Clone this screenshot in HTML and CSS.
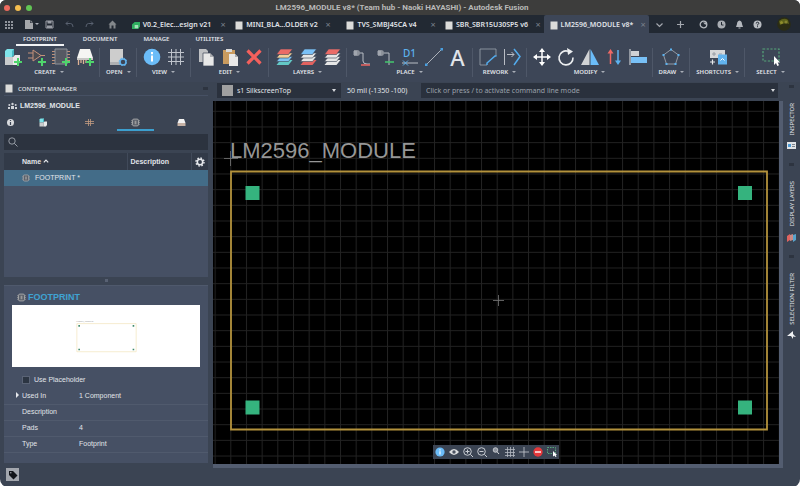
FILE: index.html
```
<!DOCTYPE html>
<html lang="en">
<head>
	<meta charset="UTF-8">
	<meta name="viewport" content="width=device-width">
	<title>LM2596_MODULE v8* - Autodesk Fusion</title>
	<link rel="stylesheet" href="styles.css">
</head>
<body>
<svg class="defs" aria-hidden="true">
	<symbol id="plus" viewBox="0 0 8 8"><path d="M4 0v8M0 4h8" stroke="#4fd56c" stroke-width="2"/></symbol>
	<symbol id="doc" viewBox="0 0 8 9"><path d="M0.5 0.5h7v8h-7z" fill="#dcdcda"/></symbol>
	<symbol id="info" viewBox="0 0 18 18"><circle cx="9" cy="9" r="8.3" fill="#6bbcf8"/><path d="M8 7.5h2v6H8zM8 4h2v2.2H8z" fill="#fff"/></symbol>
	<symbol id="grid" viewBox="0 0 18 18"><path d="M4.500 1v16M9 1v16M13.500 1v16M1 4.500h16M1 9h16M1 13.500h16" stroke="#bfc4cc" stroke-width="1" fill="none"/></symbol>
	<symbol id="chip" viewBox="0 0 10 10"><path d="M0 3h10M0 5h10M0 7h10" stroke="#8a8c91" fill="none"/><rect x="1.700" y="1.200" width="6.600" height="7.600" rx="1.500" fill="#5c616b" stroke="#a9aaac"/><path d="M4 3v4h2V3z" fill="#999"/></symbol>
	<symbol id="select" viewBox="0 0 18 18"><path d="M1 1h16v12H1z" fill="none" stroke="#57a67b" stroke-width="1.200" stroke-dasharray="2.200 1.500"/><path d="M12 8v9l2-2 1.300 3 1.700-.8-1.300-2.700H18z" fill="#fff"/></symbol>
	<symbol id="layers" viewBox="0 0 18 18"><path d="M5.500 12h12l-4 5h-12z" fill="var(--d)"/><path d="M5.500 8.500h12l-4 5h-12z" fill="var(--c)" stroke="#3d4657" stroke-width=".6"/><path d="M5.500 5h12l-4 5h-12z" fill="var(--b)" stroke="#3d4657" stroke-width=".6"/><path d="M5.500 1h12l-4 5.500h-12z" fill="var(--a)" stroke="#3d4657" stroke-width=".6"/></symbol>
	<symbol id="cube" viewBox="0 0 18 18"><path d="M1 3l2-2h7v6l-2 2H1z" fill="#7fe3ea"/><path d="M8 3l2-2v6L8 9z" fill="#45b9c4"/><path d="M1 9h8v8H1z" fill="#c9cbcc"/><path d="M9 9l2-2h5v7l-2 3H9z" fill="#e9e9e9"/></symbol>
</svg>

<div class="window">
	<header class="titlebar">
		<span class="lights"><i class="light red"></i><i class="light yellow"></i><i class="light green"></i></span>
		<h1 class="title">LM2596_MODULE v8* (Team hub - Naoki HAYASHI) - Autodesk Fusion</h1>
	</header>

	<div class="appbar">
		<div class="quick">
			<button aria-label="Data panel"><svg viewBox="0 0 9 9"><path d="M1 1h2v2H1zM4 1h2v2H4zM7 1h2v2H7zM1 4h2v2H1zM4 4h2v2H4zM7 4h2v2H7zM1 7h2v2H1zM4 7h2v2H4zM7 7h2v2H7z" fill="#8f949c"/></svg></button>
			<button class="file" aria-label="File"><svg viewBox="0 0 9 9"><path d="M1 0h5v3h3v6H1z" fill="#a4a7ab"/><path d="M6.500 0L9 2.500H6.500z" fill="#8c9096"/></svg><i class="caret"></i></button>
			<button aria-label="Save"><svg viewBox="0 0 9 9"><path d="M1 1h7v7H1z" fill="none" stroke="#9a9ea6"/><path d="M2.500 1h4v2.500h-4zM2 5.500h5V8H2z" fill="#9a9ea6"/></svg></button>
			<button aria-label="Undo"><svg viewBox="0 0 9 9"><path d="M3 1.500L1 3.500l2 2M1 3.500h4.500Q8 3.500 8 7" fill="none" stroke="#596170"/></svg></button>
			<button aria-label="Redo"><svg viewBox="0 0 9 9"><path d="M6 1.500l2 2-2 2M8 3.500H3.500Q1 3.500 1 7" fill="none" stroke="#596170"/></svg></button>
			<button class="home" aria-label="Home"><svg viewBox="0 0 9 9"><path d="M0.500 4.500L4.500 .5l4 4h-1v4h-2v-3h-2v3h-2v-4z" fill="#83878b"/></svg></button>
		</div>
		<nav class="docs">
			<div class="doc"><a href="#"><svg viewBox="0 0 9 8"><path d="M0 3l3-3h6v5L7 8H0z" fill="#2fae60"/><path d="M3 3.500h4V7H3z" fill="#a5e2b8"/></svg>V0.2_Elec...esign v21</a><button class="close" aria-label="Close">×</button></div>
			<div class="doc"><a href="#"><svg><use href="#doc"/></svg>MINI_BLA...OLDER v2</a><button class="close" aria-label="Close">×</button></div>
			<div class="doc"><a href="#"><svg><use href="#doc"/></svg>TVS_SMBJ45CA v4</a><button class="close" aria-label="Close">×</button></div>
			<div class="doc"><a href="#"><svg><use href="#doc"/></svg>SBR_SBR15U30SP5 v6</a><button class="close" aria-label="Close">×</button></div>
			<div class="doc active"><a href="#"><svg><use href="#doc"/></svg>LM2596_MODULE v8*</a><button class="close" aria-label="Close">×</button></div>
		</nav>
		<div class="account">
			<button class="more" aria-label="Tab list"><svg viewBox="0 0 9 9"><path d="M1.500 3.500l3 3 3-3" fill="none" stroke="#a4a8af" stroke-width="1.200"/></svg></button>
			<button class="add" aria-label="New tab"><svg viewBox="0 0 9 9"><path d="M4.500 1v7M1 4.500h7" stroke="#a4a8af" stroke-width="1.200"/></svg></button>
			<button aria-label="Extensions"><svg viewBox="0 0 9 9"><circle cx="4.500" cy="4.500" r="3.300" fill="none" stroke="#b4b8be" stroke-width="1.300"/><path d="M4 2.500h4v2H6z" fill="#b4b8be"/></svg></button>
			<button aria-label="Job status"><svg viewBox="0 0 9 9"><circle cx="4.500" cy="4.500" r="4" fill="#a9adb3"/><path d="M4.500 2v3h2" fill="none" stroke="#222933"/></svg></button>
			<button aria-label="Notifications"><svg viewBox="0 0 9 9"><path d="M4.500 .5Q7 1 7 4l1 3H1l1-3q0-3 2.500-3.500zM3.500 7.500h2v1h-2z" fill="#b4b8be"/></svg></button>
			<button aria-label="Help"><svg viewBox="0 0 9 9"><circle cx="4.500" cy="4.500" r="4" fill="#b9bdc3"/><path d="M3.200 3.500q0-1.300 1.300-1.300t1.300 1.200q0 .8-1.300 1.300v.8M4.500 6.200v1" fill="none" stroke="#222933"/></svg></button>
			<button class="avatar" aria-label="Profile"><svg viewBox="0 0 14 14"><circle cx="7" cy="7" r="6.800" fill="#2b2c14"/><path d="M2 4q5-4 9-1l1 4q-4-2-9 1z" fill="#5d621a"/><circle cx="4.500" cy="5.500" r="1.500" fill="#8f8d2c"/><circle cx="9" cy="5" r="1.500" fill="#858432"/></svg></button>
		</div>
	</div>

	<div class="ribbon">
		<nav class="modes">
			<a class="active" href="#">FOOTPRINT</a>
			<a href="#">DOCUMENT</a>
			<a href="#">MANAGE</a>
			<a href="#">UTILITIES</a>
		</nav>
		<div class="groups">
			<div class="group">
				<div class="tools">
					<button aria-label="New component"><svg viewBox="0 0 18 18"><use href="#cube"/><use href="#plus" x="10" y="10" width="8" height="8"/></svg></button>
					<button aria-label="New symbol"><svg viewBox="0 0 18 18"><path d="M0 5h5M0 10h5M12 7.500h5" stroke="#c4917a"/><path d="M5 2l8 5.500L5 13z" fill="#4b4b50" stroke="#c4917a"/><use href="#plus" x="10" y="10" width="8" height="8"/></svg></button>
					<button aria-label="New footprint"><svg viewBox="0 0 18 18"><path d="M0 3.500h18M0 6.500h18M0 9.500h18M0 12.500h18M0 15.500h12" stroke="#bf9077"/><path d="M3 1h12v15H3z" fill="#555963" stroke="#8e9299"/><use href="#plus" x="10" y="10" width="8" height="8"/></svg></button>
					<button aria-label="New package"><svg viewBox="0 0 18 18"><path d="M4 1h10l3 9H1z" fill="#f5f5f3"/><path d="M1 10h16v2H1z" fill="#c7c7c5"/><path d="M2.500 12v5M5 12v3M7.500 12v4M10 12v3" stroke="#dfb295" stroke-width="1.300"/><use href="#plus" x="10" y="10" width="8" height="8"/></svg></button>
				</div>
				<button class="menu">CREATE<i class="caret"></i></button>
			</div>
			<div class="group">
				<div class="tools">
					<button aria-label="Open"><svg viewBox="0 0 18 18"><path d="M1 1h13v15H1z" fill="#cdcdcd"/><path d="M1 14h13v3H1z" fill="#aeb0b3"/><circle cx="14" cy="14" r="3" fill="#3d4657" stroke="#62b3ee" stroke-width="1.500"/><circle cx="14" cy="14" r="3.900" fill="none" stroke="#62b3ee" stroke-dasharray="1.500 1.560"/></svg></button>
				</div>
				<button class="menu">OPEN<i class="caret"></i></button>
			</div>
			<div class="group">
				<div class="tools">
					<button aria-label="Info"><svg><use href="#info"/></svg></button>
					<button aria-label="Grid"><svg><use href="#grid"/></svg></button>
				</div>
				<button class="menu">VIEW<i class="caret"></i></button>
			</div>
			<div class="group">
				<div class="tools">
					<button aria-label="Copy"><svg viewBox="0 0 18 18"><path d="M2 1h7l2 2v11H2z" fill="#bfc1c4"/><path d="M6 5h7l4 4v9H6z" fill="#e8e8e8" stroke="#3d4657" stroke-width=".7"/><path d="M13 5v4h4z" fill="#aaacaf"/></svg></button>
					<button aria-label="Paste"><svg viewBox="0 0 18 18"><path d="M2 2h12v14H2z" fill="#c99b5f"/><path d="M5 1h6v3H5z" fill="#d9d9d9"/><path d="M8 6h6l3 3v9H8z" fill="#e8e8e8"/><path d="M14 6v3h3z" fill="#aaacaf"/></svg></button>
					<button aria-label="Delete"><svg viewBox="0 0 18 18"><path d="M2.500 2.500l13 13M15.500 2.500l-13 13" stroke="#f4605c" stroke-width="3.200"/></svg></button>
				</div>
				<button class="menu">EDIT<i class="caret"></i></button>
			</div>
			<div class="group">
				<div class="tools">
					<button aria-label="Layer settings"><svg class="all-layers"><use href="#layers"/></svg></button>
					<button aria-label="Bottom layer"><svg class="bottom-layer"><use href="#layers"/></svg></button>
					<button aria-label="Top layer"><svg class="top-layer"><use href="#layers"/></svg></button>
				</div>
				<button class="menu">LAYERS<i class="caret"></i></button>
			</div>
			<div class="group">
				<div class="tools">
					<button aria-label="Pad"><svg viewBox="0 0 18 18"><path d="M1 2h3q3 0 3 3t-3 3H1z" fill="#8d929b"/><path d="M0 4h4M0 6h4" stroke="#c8ccd2" stroke-width=".7"/><path d="M7 5h3v8q0 3 4 3h3" fill="none" stroke="#b9bdc5"/><path d="M8 17h9" stroke="#e0625f" stroke-width="1.600"/></svg></button>
					<button aria-label="Wire pad"><svg viewBox="0 0 18 18"><path d="M1 2h3q3 0 3 3t-3 3H1z" fill="#8d929b"/><path d="M0 4h4M0 6h4" stroke="#c8ccd2" stroke-width=".7"/><path d="M7 5h5v12" fill="none" stroke="#b9bdc5"/><path d="M8 14h9" stroke="#45c06c" stroke-width="1.600"/></svg></button>
					<button class="name-mark">D1<svg viewBox="0 0 18 7"><path d="M1 4h16" stroke="#b9bdc5"/><path d="M2 1.500l5 5M7 1.500l-5 5" stroke="#5cb2ef"/></svg></button>
					<button aria-label="Line"><svg viewBox="0 0 18 18"><path d="M1.500 16.500l15-15" stroke="#b9bdc5" stroke-width=".9"/><path d="M0 15.500h2.500V18H0zM15.500 0H18v2.500h-2.500z" fill="#4a9fe0"/></svg></button>
					<button class="text-mark">A</button>
				</div>
				<button class="menu">PLACE<i class="caret"></i></button>
			</div>
			<div class="group">
				<div class="tools">
					<button aria-label="Miter"><svg viewBox="0 0 18 18"><path d="M8 17H1V1h16v7" fill="none" stroke="#9da3ad" stroke-width=".8"/><path d="M8 17v-2l8-7h1.500" fill="none" stroke="#53acee" stroke-width="1.500"/></svg></button>
					<button aria-label="Split"><svg viewBox="0 0 18 18"><path d="M1.500 1v16M4 6.500h7M8.500 4L11 6.500 8.500 9" fill="none" stroke="#b9bdc5"/><path d="M11 1l6 7.500-6 8.500" fill="none" stroke="#53acee" stroke-width="1.500"/></svg></button>
				</div>
				<button class="menu">REWORK<i class="caret"></i></button>
			</div>
			<div class="group">
				<div class="tools">
					<button aria-label="Move"><svg viewBox="0 0 18 18"><path d="M9 2v14M2 9h14" stroke="#fff" stroke-width="1.500"/><path d="M9 0l3 4H6zM9 18l3-4H6zM0 9l4-3v6zM18 9l-4-3v6z" fill="#fff"/></svg></button>
					<button aria-label="Rotate"><svg viewBox="0 0 18 18"><path d="M11 3.200A7 7 0 1 0 16 9.500" fill="none" stroke="#eceef0" stroke-width="1.600"/><path d="M10 0l6 3.500-5 3.500z" fill="#eceef0"/></svg></button>
					<button aria-label="Mirror"><svg viewBox="0 0 18 18"><path d="M8.500 1v16H0z" fill="#d0d2d4"/><path d="M9.500 1v16H18z" fill="#6bbcf8"/></svg></button>
					<button aria-label="Swap"><svg viewBox="0 0 18 18"><path d="M5.500 4v12" stroke="#ee6965" stroke-width="1.500"/><path d="M5.500 1L8.500 5.500h-6z" fill="#ee6965"/><path d="M13 2v12" stroke="#5cb2ef" stroke-width="1.500"/><path d="M13 17l3-4.500h-6z" fill="#5cb2ef"/></svg></button>
					<button aria-label="Align"><svg viewBox="0 0 18 18"><path d="M1 1v16" stroke="#e4e6e8"/><path d="M2 3h8v5H2z" fill="#cfd1d4"/><path d="M2 9h16v6H2z" fill="#78c0f6"/></svg></button>
				</div>
				<button class="menu">MODIFY<i class="caret"></i></button>
			</div>
			<div class="group">
				<div class="tools">
					<button aria-label="Polygon"><svg viewBox="0 0 18 18"><path d="M9 1.500l7.500 5.500-3 9h-9l-3-9z" fill="none" stroke="#a9aeb7" stroke-width=".8"/><path d="M8 .5h2v2H8zM15.500 6h2v2h-2zM12.500 15h2v2h-2zM3.500 15h2v2h-2zM.5 6h2v2h-2z" fill="#5cb2ef"/></svg></button>
				</div>
				<button class="menu">DRAW<i class="caret"></i></button>
			</div>
			<div class="group">
				<div class="tools">
					<button aria-label="Shortcut keys"><svg viewBox="0 0 18 18"><path d="M1 2h15v8H1z" fill="#d6d7d9"/><path d="M5 4v4M3 6h4M10 6h3" stroke="#8b919b" stroke-width=".8"/><path d="M9 6.500h9v10H9z" fill="#62b3ee"/><path d="M11.500 12.500l2-2 2 2" fill="none" stroke="#fff"/><path d="M3.500 11.500v5M1 14h5" stroke="#e6e8ea" stroke-width="1.200"/></svg></button>
				</div>
				<button class="menu">SHORTCUTS<i class="caret"></i></button>
			</div>
			<div class="group">
				<div class="tools">
					<button aria-label="Select"><svg><use href="#select"/></svg></button>
				</div>
				<button class="menu">SELECT<i class="caret"></i></button>
			</div>
		</div>
	</div>

	<main class="main">
		<aside class="sidebar">
			<h2 class="side-head"><svg><use href="#doc"/></svg>CONTENT MANAGER<i class="pin"></i></h2>
			<p class="library"><svg viewBox="0 0 9 8"><path d="M0 7V5h2v2zM3 7V4h3v3zM7 7V5h2v2z" fill="#d0d3d8"/><circle cx="1.300" cy="3" r="1" fill="#d0d3d8"/><circle cx="4.500" cy="2" r="1.200" fill="#d0d3d8"/><circle cx="7.700" cy="3" r="1" fill="#d0d3d8"/></svg>LM2596_MODULE</p>
			<nav class="kinds">
				<a href="#" aria-label="Info"><svg viewBox="0 0 9 9"><circle cx="4.500" cy="4.500" r="3.500" fill="#d9dbde"/><path d="M4.500 2v1M4.500 4v3" stroke="#3b4453" stroke-width="1.200"/></svg></a>
				<a href="#" aria-label="Components"><svg><use href="#cube"/></svg></a>
				<a href="#" aria-label="Symbols"><svg viewBox="0 0 9 9"><path d="M0 3.500h9M0 5.500h9M3.500 1v7M5.500 1v7" stroke="#c29a80" stroke-width=".8"/></svg></a>
				<a class="active" href="#" aria-label="Footprints"><svg><use href="#chip"/></svg></a>
				<a href="#" aria-label="Packages"><svg viewBox="0 0 9 9"><path d="M2 1h5l1.500 4h-8z" fill="#f3f3f2"/><path d="M.5 5h8v3h-8z" fill="#c6b2a5"/></svg></a>
			</nav>
			<label class="search"><svg viewBox="0 0 10 10"><circle cx="4" cy="4" r="3.200" fill="none" stroke="#a2a7b0" stroke-width=".9"/><path d="M6.300 6.300L9.500 9.500" stroke="#a2a7b0" stroke-width=".9"/></svg><input type="text" aria-label="Search"></label>
			<div class="list">
				<table>
					<thead>
						<tr>
							<th class="col-name">Name<svg viewBox="0 0 6 6"><path d="M.8 4.300L3 2l2.200 2.300" fill="none" stroke="#e6e8ec" stroke-width="1.200"/></svg></th>
							<th>Description</th>
							<th class="col-gear"><button aria-label="Columns"><svg viewBox="0 0 10 10"><circle cx="5" cy="5" r="2.700" fill="none" stroke="#e6e8ec" stroke-width="1.600"/><circle cx="5" cy="5" r="4" fill="none" stroke="#e6e8ec" stroke-width="1.400" stroke-dasharray="1.570 1.570"/></svg></button></th>
						</tr>
					</thead>
					<tbody>
						<tr><td class="col-name"><svg><use href="#chip"/></svg>FOOTPRINT *</td><td></td><td></td></tr>
					</tbody>
				</table>
			</div>
			<i class="splitter"></i>
			<section class="details">
				<h3><svg><use href="#chip"/></svg>FOOTPRINT</h3>
				<svg class="preview" viewBox="0 0 187 62">
					<text class="preview-name" x="64" y="17">LM2596_MODULE</text>
					<path d="M64.500 18.500h59v28h-59z" fill="none" stroke="#f4e5bd" stroke-width=".7"/>
					<path d="M66 20h1.600v1.600H66zM120 20h1.600v1.600H120zM66 43.500h1.600v1.600H66zM120 43.500h1.600v1.600H120z" fill="#3f8a6b"/>
				</svg>
				<label class="placeholder"><input type="checkbox">Use Placeholder</label>
				<table>
					<tr><th scope="row" class="expand">Used In</th><td>1 Component</td></tr>
					<tr><th scope="row">Description</th><td></td></tr>
					<tr><th scope="row">Pads</th><td>4</td></tr>
					<tr><th scope="row">Type</th><td>Footprint</td></tr>
				</table>
			</section>
		</aside>

		<section class="editor">
			<div class="params">
				<label class="layer"><i class="swatch"></i><select aria-label="Layer"><option>s1 SilkscreenTop</option></select></label>
				<output class="coords">50 mil (-1350 -100)</output>
				<label class="command"><input type="text" aria-label="Command" placeholder="Click or press / to activate command line mode"></label>
			</div>
			<div class="canvas">
				<svg class="board" viewBox="0 0 566 363" preserveAspectRatio="xMidYMid slice">
					<defs>
						<pattern id="mesh" width="15.670" height="15.670" x="17.300" y="9.800" patternUnits="userSpaceOnUse"><path d="M.5 0v15.670M0 .5h15.670" stroke="#222" fill="none"/></pattern>
					</defs>
					<path d="M0 0h566v363H0z" fill="#000"/>
					<path d="M0 0h566v363H0z" fill="url(#mesh)"/>
					<path d="M17.500 50v15M11 57.500h14M280 199.500h11M285.500 194v11" stroke="#777" stroke-width=".8"/>
					<text class="part-name" x="17" y="57">LM2596_MODULE</text>
					<path d="M18 70.500h536v258H18z" fill="none" stroke="#b3923c" stroke-width="1.800"/>
					<path d="M32.500 85h14v14h-14zM525 85h14v14h-14zM32.500 299.500h14v14h-14zM525 299.500h14v14h-14z" fill="#35b37e"/>
				</svg>
				<div class="float">
					<button aria-label="Info"><svg><use href="#info"/></svg></button>
					<button aria-label="Show"><svg viewBox="0 0 10 10"><path d="M0 5q5-6 10 0-5 6-10 0z" fill="#dcdee0"/><circle cx="5" cy="5" r="1.700" fill="#4b5362"/></svg></button>
					<button aria-label="Zoom in"><svg viewBox="0 0 10 10"><circle cx="4.500" cy="4.500" r="3.800" fill="none" stroke="#c8ccd2"/><path d="M2.500 4.500h4M4.500 2.500v4M7.500 7.500L10 10" stroke="#c8ccd2"/></svg></button>
					<button aria-label="Zoom out"><svg viewBox="0 0 10 10"><circle cx="4.500" cy="4.500" r="3.800" fill="none" stroke="#c8ccd2"/><path d="M2.500 4.500h4M7.500 7.500L10 10" stroke="#c8ccd2"/></svg></button>
					<button aria-label="Zoom to fit"><svg viewBox="0 0 10 10"><circle cx="4.500" cy="3" r="2.300" fill="#8f959f" stroke="#d5d8dc" stroke-width=".8"/><path d="M6 4.700l2 2.300" stroke="#d5d8dc"/></svg></button>
					<button aria-label="Grid"><svg viewBox="0 0 10 10"><path d="M2.500 0v10M5.500 0v10M8.500 0v10M0 2.500h10M0 5.500h10M0 8.500h10" stroke="#b4b9c1" stroke-width=".8"/></svg></button>
					<button aria-label="Origin"><svg viewBox="0 0 10 10"><path d="M5 0v10M0 5h10" stroke="#c8ccd2" stroke-width=".8"/></svg></button>
					<button aria-label="Stop"><svg viewBox="0 0 10 10"><circle cx="5" cy="5" r="4.700" fill="#e5383b"/><path d="M2 5h6" stroke="#fff" stroke-width="1.400"/></svg></button>
					<button aria-label="Select"><svg viewBox="0 0 10 10"><path d="M.5 .5h8v6h-8z" fill="none" stroke="#57a67b" stroke-dasharray="1.500 1"/><path d="M6 4v5.500l1.500-1L8.500 10l1-.5-.8-1.500H10z" fill="#fff"/></svg></button>
				</div>
			</div>
		</section>

		<aside class="dock">
			<a href="#"><i class="pin"></i><span>INSPECTOR</span><svg viewBox="0 0 9 9"><path d="M0 1h9v7H0z" fill="#e0e3e6"/><path d="M1 3h3v3H1z" fill="#4f9bd4"/><path d="M5 3.500h3M5 5.500h3" stroke="#7d838c"/></svg></a>
			<a href="#"><i class="pin"></i><span>DISPLAY LAYERS</span><svg viewBox="0 0 9 9"><path d="M0 3l3-2v6L0 9z" fill="#df6460"/><path d="M3 2l3-1v6L3 8z" fill="#c98b86"/><path d="M6 2l3-1v6L6 9z" fill="#57a4cc"/></svg></a>
			<a href="#"><i class="pin"></i><span>SELECTION FILTER</span><svg viewBox="0 0 9 9"><path d="M0 6l6-5v3l3 3-3-.5V9L4 6z" fill="#eef0f2"/></svg></a>
		</aside>
	</main>

	<footer class="status">
		<button aria-label="Tags"><svg viewBox="0 0 10 10"><path d="M1 1h4l4.500 4.500-4 4L1 5z" fill="#111419"/><circle cx="2.800" cy="2.800" r=".8" fill="#a3a7ae"/></svg></button>
	</footer>
</div>
</body>
</html>
```

FILE: styles.css
```
*{
	box-sizing: border-box;
}
html,body{
	margin: 0;
	height: 100%;
	background: #fff;
}
body{
	font: 6px/10px "Noto Sans", "Open Sans", sans-serif;
	color: #e1e4e9;
}
h1,h2,h3,p{
	margin: 0;
	font-size: inherit;
}
a{
	color: inherit;
	text-decoration: none;
}
button,input,select{
	margin: 0;
	padding: 0;
	border: 0;
	background: none;
	font: inherit;
	color: inherit;
}
button,a{
	display: flex;
	align-items: center;
}
svg{
	display: block;
	flex: none;
}
table{
	width: 100%;
	border-collapse: collapse;
}
th,td{
	padding: 0;
	text-align: left;
}
.defs{
	position: absolute;
	width: 0;
	height: 0;
}
.window{
	display: flex;
	flex-direction: column;
	min-height: 100vh;
	background: #3b4453;
	border-radius: 6px 6px 8px 8px;
	overflow: hidden;
}
.caret{
	margin-left: 4px;
	border: 2px solid transparent;
	border-top-color: #a9aeb7;
	border-bottom: 0;
}
.pin{
	width: 5px;
	height: 3px;
	background: #2d3440;
}

/* title bar */
.titlebar{
	display: flex;
	align-items: center;
	height: 15px;
	background: #3d3d3c;
}
.lights{
	display: flex;
	flex: 1;
	gap: 5px;
	padding-left: 4px;
}
.light{
	width: 6px;
	height: 6px;
	border-radius: 50%;
}
.red{
	background: #ed6a5e;
}
.yellow{
	background: #f5bf4f;
}
.green{
	background: #61c554;
}
.title{
	font: 700 8px/15px Roboto, sans-serif;
	color: #b9b9b8;
}
.titlebar::after{
	content: "";
	flex: 1;
}

/* tabs */
.appbar{
	display: flex;
	height: 18px;
	background: #222933;
}
.quick,.account{
	display: flex;
	align-items: center;
}
.quick{
	width: 124px;
	gap: 11px;
	padding-left: 4px;
}
.quick svg,.account svg{
	width: 9px;
	height: 9px;
}
.quick .caret{
	margin-left: 2px;
}
.quick .home{
	margin-left: 3px;
}
.quick .file{
	margin-right: -5px;
}
.docs{
	display: flex;
	flex: 1;
}
.doc{
	display: flex;
	flex: 1;
	align-items: center;
	padding-right: 2px;
}
.doc a{
	flex: 1;
	justify-content: center;
	gap: 3px;
	height: 18px;
	padding-top: 2px;
	font-size: 7px;
	font-weight: 600;
	white-space: nowrap;
}
.doc svg{
	width: 8px;
	height: 9px;
}
.doc.active{
	background: #3d4657;
	border-radius: 2px 2px 0 0;
}
.close{
	width: 8px;
	justify-content: center;
	padding-top: 2px;
	font-size: 9px;
	color: #7a808b;
}
.account{
	gap: 9px;
	padding: 0 9px 0 6px;
}
.account .more{
	margin-right: 3px;
}
.account .add{
	margin-right: 5px;
}
.account .avatar{
	margin-left: 6px;
}
.account .avatar svg{
	width: 14px;
	height: 14px;
}

/* ribbon */
.ribbon{
	background: #3d4657;
	font-weight: 600;
}
.modes{
	display: flex;
	gap: 12px;
	padding-left: 16px;
}
.modes a{
	height: 13px;
	padding: 0 7px;
	border-bottom: 2px solid transparent;
}
.modes .active{
	border-color: #f1f2f4;
}
.groups{
	display: flex;
	padding: 2px 0 5px;
}
.group{
	display: flex;
	flex-direction: column;
	align-items: center;
	gap: 1px;
	padding: 0 5px 0 6px;
	border-right: 1px solid #4e5768;
}
.group:first-child{
	padding-left: 4px;
}
.group:last-child{
	flex: 1;
	padding-right: 10px;
	border: 0;
}
.tools{
	display: flex;
	gap: 6px;
}
.tools svg{
	width: 18px;
	height: 18px;
}
.menu{
	height: 10px;
}
.all-layers{
	--a: #ea6b67;
	--b: #f0cf99;
	--c: #7ec4f5;
	--d: #63c9c6;
}
.bottom-layer{
	--a: #7ac0f6;
	--b: #e6e6e6;
	--c: #e6e6e6;
	--d: #e2625f;
}
.top-layer{
	--a: #ea6b67;
	--b: #e6e6e6;
	--c: #e6e6e6;
	--d: #e6e6e6;
}
.name-mark{
	flex-direction: column;
	width: 18px;
	height: 18px;
	font-size: 10px;
	font-weight: 500;
	line-height: 11px;
	color: #5cb2ef;
}
.name-mark svg{
	height: 7px;
}
.text-mark{
	justify-content: center;
	width: 18px;
	height: 18px;
	font-size: 22px;
	font-weight: 500;
}

/* content manager */
.main{
	display: flex;
	flex: 1;
}
.sidebar{
	display: flex;
	flex-direction: column;
	width: 209px;
	padding: 0 1px 5px 4px;
	font: 7px/10px "Liberation Sans", Arial, sans-serif;
}
.side-head{
	display: flex;
	align-items: center;
	gap: 5px;
	height: 14px;
	font: 500 6px/10px "Noto Sans", sans-serif;
	border-bottom: 1px solid #465063;
}
.side-head svg{
	width: 8px;
	height: 9px;
	margin-left: 1px;
}
.side-head .pin{
	margin-left: auto;
}
.library{
	display: flex;
	align-items: center;
	gap: 3px;
	height: 20px;
	padding-left: 4px;
	font-weight: bold;
}
.library svg{
	width: 9px;
	height: 8px;
}
.kinds{
	display: flex;
	gap: 8px;
	padding-right: 8px;
}
.kinds a{
	flex: 1;
	justify-content: center;
	height: 15px;
	border-bottom: 2px solid transparent;
}
.kinds a:first-child{
	flex: 0 0 13px;
}
.kinds .active{
	border-color: #3c9fce;
}
.kinds svg{
	width: 9px;
	height: 9px;
}
.search{
	display: flex;
	align-items: center;
	gap: 4px;
	height: 16px;
	margin: 3px 0;
	padding: 0 4px;
	background: #2c333f;
}
.search svg{
	width: 10px;
	height: 10px;
}
.search input{
	flex: 1;
}
.list{
	height: 124px;
	background: #465064;
}
.list th{
	height: 17px;
	background: #323a48;
	border-left: 1px solid #414a5a;
	padding-left: 3px;
}
.list th svg{
	display: inline-block;
	width: 6px;
	height: 6px;
	margin-left: 2px;
}
.list td{
	height: 16px;
	background: #436c88;
}
.list .col-name{
	width: 123px;
	padding-left: 18px;
	border-left: 0;
}
.list .col-gear{
	width: 17px;
	padding-left: 0;
}
.list .col-gear svg{
	width: 10px;
	height: 10px;
	margin: 0 3px;
}
.list td svg{
	display: inline-block;
	width: 8px;
	height: 8px;
	margin-right: 5px;
	vertical-align: middle;
}
.splitter{
	align-self: center;
	width: 3px;
	height: 3px;
	margin: 2px 0 3px;
	background: #586173;
}
.details{
	flex: 1;
	background: #465064;
	border-top: 1px solid #4f596c;
}
.details h3{
	display: flex;
	align-items: center;
	gap: 2px;
	height: 19px;
	padding: 3px 0 0 13px;
	font-size: 9px;
	color: #3fa3d2;
}
.details h3 svg{
	width: 9px;
	height: 9px;
}
.preview{
	width: calc(100% - 16px);
	margin-left: 8px;
	background: #fff;
}
.preview-name{
	font: 2px "Liberation Sans", sans-serif;
	fill: #999;
}
.placeholder{
	display: flex;
	align-items: center;
	gap: 4px;
	height: 21px;
	padding: 4px 0 0 18px;
}
.placeholder input{
	width: 8px;
	height: 8px;
	appearance: none;
	background: #2c3542;
	border: 1px solid #5a6375;
}
.details tr{
	height: 16px;
	border-bottom: 1px solid #505a6d;
}
.details th{
	width: 75px;
	padding-left: 18px;
	font-weight: normal;
}
.details .expand{
	padding-left: 12px;
}
.expand::before{
	content: "";
	display: inline-block;
	margin-right: 3px;
	border: 3px solid transparent;
	border-left-color: #e6e8ec;
	border-right: 0;
}

/* editor */
.editor{
	display: flex;
	flex: 1;
	flex-direction: column;
	padding-left: 4px;
}
.params{
	display: flex;
	height: 19px;
	padding: 1px 0 3px 4px;
	font-size: 7px;
}
.layer{
	display: flex;
	align-items: center;
	gap: 4px;
	width: 124px;
	padding: 0 5px;
	background: #2a313d;
}
.swatch{
	width: 11px;
	height: 11px;
	background: #a0a0a0;
}
.layer select{
	flex: 1;
	appearance: none;
}
.layer::after,.command::after{
	content: "";
	border: 2px solid transparent;
	border-top: 3px solid #d5d8dc;
	border-bottom: 0;
}
.coords{
	width: 80px;
	padding-left: 6px;
	line-height: 15px;
}
.command{
	display: flex;
	flex: 1;
	align-items: center;
	padding: 0 3px 0 5px;
	margin-right: 5px;
	background: #2a313d;
}
.command input{
	flex: 1;
}
.command input::placeholder{
	color: #9ba1ab;
}
.canvas{
	position: relative;
	display: flex;
	flex: 1;
	background: #000;
	border: solid #535d70;
	border-width: 0 4px 4px 0;
}
.board{
	flex: 1;
	width: 100%;
}
.part-name{
	font: 22px "Liberation Sans", Arial, sans-serif;
	fill: #969696;
}
.float{
	position: absolute;
	left: 220px;
	bottom: 5px;
	display: flex;
	gap: 4px;
	padding: 2px;
	background: #3b4453;
}
.float svg{
	width: 10px;
	height: 10px;
}

/* collapsed panels */
.dock{
	display: flex;
	flex-direction: column;
	gap: 13px;
	width: 17px;
	padding-top: 3px;
}
.dock a{
	flex-direction: column;
}
.dock span{
	margin: 15px 0 6px;
	writing-mode: vertical-rl;
	transform: rotate(180deg);
}
.dock svg{
	width: 9px;
	height: 9px;
}
.status{
	height: 19px;
	padding: 0 6px;
}
.status button{
	justify-content: center;
	width: 13px;
	height: 13px;
	background: #a3a7ae;
}
.status svg{
	width: 10px;
	height: 10px;
}
```
